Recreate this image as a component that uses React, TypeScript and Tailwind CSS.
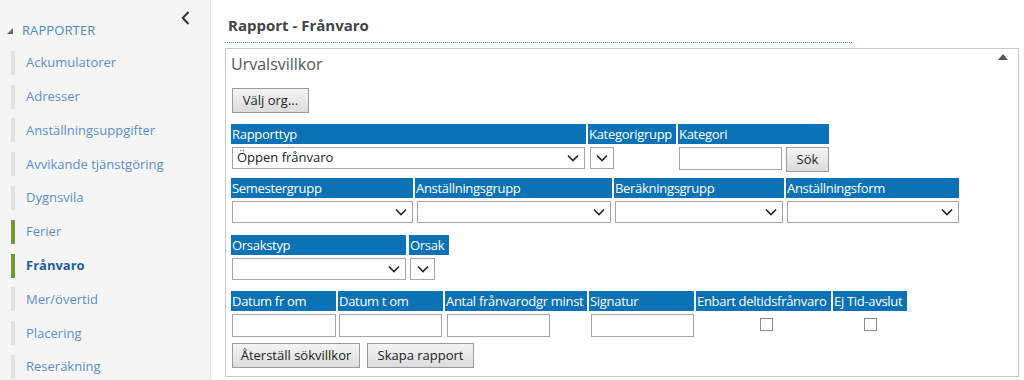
import React from "react";

const font = { fontFamily: '"Open Sans", "Noto Sans", sans-serif' };

function Chevron() {
  return (
    <svg width="12" height="8" viewBox="0 0 12 8" className="shrink-0">
      <path d="M1 1.5 L6 6.5 L11 1.5" fill="none" stroke="#222" strokeWidth="1.6" />
    </svg>
  );
}

function Sel({ w, text }: { w: number; text?: string }) {
  return (
    <div
      className="h-[22px] border border-[#a6a6a6] bg-white flex items-center justify-between pl-[4px] pr-[5px] text-[13px] text-[#222] shrink-0"
      style={{ width: w }}
    >
      <span>{text ?? ""}</span>
      <Chevron />
    </div>
  );
}

function Inp({ w }: { w: number }) {
  return <div className="h-[23px] border border-[#a6a6a6] bg-white shrink-0" style={{ width: w }} />;
}

function H({ w, children }: { w: number; children: React.ReactNode }) {
  return (
    <div
      className="h-[20px] bg-[#0b72b6] text-white text-[13px] leading-[20px] pl-[1px] tracking-[-0.3px] whitespace-nowrap overflow-hidden shrink-0"
      style={{ width: w }}
    >
      {children}
    </div>
  );
}

function Btn({ children, w }: { children: React.ReactNode; w: number }) {
  return (
    <div
      className="h-[25px] border border-[#9a9a9a] bg-gradient-to-b from-[#f4f4f4] to-[#dcdcdc] text-[13px] text-[#222] flex items-center justify-center shrink-0"
      style={{ width: w }}
    >
      {children}
    </div>
  );
}

const items = [
  "Ackumulatorer",
  "Adresser",
  "Anställningsuppgifter",
  "Avvikande tjänstgöring",
  "Dygnsvila",
  "Ferier",
  "Frånvaro",
  "Mer/övertid",
  "Placering",
  "Reseräkning",
];

export default function App() {
  return (
    <div className="flex w-[1024px] h-[380px] overflow-hidden bg-white" style={font}>
      {/* Sidebar */}
      <div className="w-[211px] h-full bg-[#f5f5f5] border-r border-[#e4e4e4] shrink-0 relative">
        <svg className="absolute left-[181px] top-[11px]" width="9" height="14" viewBox="0 0 9 14">
          <path d="M7.5 1 L1.8 7 L7.5 13" fill="none" stroke="#333" strokeWidth="2" />
        </svg>
        <div className="flex items-center pt-[21px] h-[41px]">
          <svg className="ml-[7px] mr-[9px]" width="6" height="6" viewBox="0 0 6 6">
            <polygon points="6,0 6,6 0,6" fill="#666" />
          </svg>
          <span className="text-[13px] text-[#4d88c6] tracking-[0.1px]">RAPPORTER</span>
        </div>
        <div className="pt-[5px]">
          {items.map((it) => {
            const active = it === "Frånvaro";
            const green = it === "Ferier" || it === "Frånvaro";
            return (
              <div key={it} className="h-[33.8px] flex items-center">
                <div className={`ml-[11px] w-[4px] h-[24px] ${green ? "bg-[#6d9c2a]" : "bg-[#e1e1e1]"}`} />
                <span
                  className={`ml-[11px] text-[13px] ${active ? "font-bold text-[#1f5e9b]" : "text-[#5a8ec7]"}`}
                >
                  {it}
                </span>
              </div>
            );
          })}
        </div>
      </div>

      {/* Main */}
      <div className="flex-1 pl-[14px] pt-[15px]">
        <div className="w-[627px] border-b border-dotted border-[#3d8bc2] pb-[6px] pl-[3px]">
          <div className="text-[15px] leading-[21px] font-bold text-[#444]">Rapport - Frånvaro</div>
        </div>
        <div className="mt-[5px] w-[794px] h-[329px] border border-[#c8c8c8] relative pl-[5px] pt-[4px]">
          <svg className="absolute right-[10px] top-[5px]" width="10" height="6" viewBox="0 0 10 6">
            <polygon points="5,0 10,6 0,6" fill="#555" />
          </svg>
          <div className="text-[16px] leading-[22px] text-[#555]">Urvalsvillkor</div>

          <div className="mt-[13px] pl-[1px]">
            <Btn w={77}>Välj org...</Btn>
          </div>

          {/* Row 1 */}
          <div className="mt-[11px] flex gap-[2px]">
            <H w={355}>Rapporttyp</H>
            <H w={88}>Kategorigrupp</H>
            <H w={151}>Kategori</H>
          </div>
          <div className="mt-[3px] flex items-start">
            <div className="ml-[1px]"><Sel w={353} text="Öppen frånvaro" /></div>
            <div className="ml-[5px]"><Sel w={24} /></div>
            <div className="ml-[65px]"><Inp w={103} /></div>
            <div className="ml-[4px]"><Btn w={43}>Sök</Btn></div>
          </div>

          {/* Row 2 */}
          <div className="mt-[6px] flex gap-[2px]">
            <H w={182}>Semestergrupp</H>
            <H w={197}>Anställningsgrupp</H>
            <H w={170}>Beräkningsgrupp</H>
            <H w={173}>Anställningsform</H>
          </div>
          <div className="mt-[3px] flex">
            <div className="ml-[1px]"><Sel w={181} /></div>
            <div className="ml-[4px]"><Sel w={194} /></div>
            <div className="ml-[4px]"><Sel w={168} /></div>
            <div className="ml-[4px]"><Sel w={172} /></div>
          </div>

          {/* Row 3 */}
          <div className="mt-[12px] flex gap-[3px]">
            <H w={175}>Orsakstyp</H>
            <H w={40}>Orsak</H>
          </div>
          <div className="mt-[3px] flex">
            <div className="ml-[1px]"><Sel w={174} /></div>
            <div className="ml-[4px]"><Sel w={25} /></div>
          </div>

          {/* Row 4 */}
          <div className="mt-[11px] flex gap-[2px]">
            <H w={105}>Datum fr om</H>
            <H w={105}>Datum t om</H>
            <H w={142}>Antal frånvarodgr minst</H>
            <H w={105}>Signatur</H>
            <H w={135}>Enbart deltidsfrånvaro</H>
            <H w={74}>Ej Tid-avslut</H>
          </div>
          <div className="mt-[3px] flex items-start">
            <div className="ml-[1px]"><Inp w={104} /></div>
            <div className="ml-[3px]"><Inp w={103} /></div>
            <div className="ml-[5px]"><Inp w={103} /></div>
            <div className="ml-[41px]"><Inp w={103} /></div>
            <div className="ml-[66px] mt-[4px] w-[13px] h-[13px] border border-[#8a8a8a] bg-white" />
            <div className="ml-[91px] mt-[4px] w-[13px] h-[13px] border border-[#8a8a8a] bg-white" />
          </div>

          {/* Buttons */}
          <div className="mt-[6px] flex gap-[7px] pl-[1px]">
            <Btn w={128}>Återställ sökvillkor</Btn>
            <Btn w={107}>Skapa rapport</Btn>
          </div>
        </div>
      </div>
    </div>
  );
}
